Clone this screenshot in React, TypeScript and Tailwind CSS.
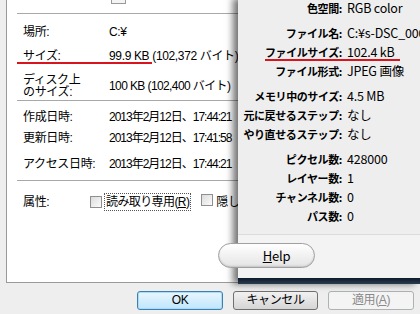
import { FC, ReactNode } from "react";

const jp = "font-['Liberation_Sans','Noto_Sans_CJK_JP',sans-serif]";

const Row: FC<{ label: ReactNode; value: ReactNode; h: string }> = ({ label, value, h }) => (
  <div className={`flex items-center ${h}`}>
    <div className="w-[102px] shrink-0 pl-[16px] leading-[12px]">{label}</div>
    <div className="whitespace-nowrap">{value}</div>
  </div>
);

const InfoRow: FC<{ label: string; value: string }> = ({ label, value }) => (
  <div className="flex h-[19px] items-center">
    <div className="flex w-[104px] shrink-0 justify-end text-[11px] font-bold whitespace-nowrap tracking-[-0.4px]">
      {label}
    </div>
    <div className="pl-[5px] whitespace-nowrap">{value}</div>
  </div>
);

const Checkbox: FC = () => (
  <span className="inline-block h-[12px] w-[12px] shrink-0 border border-[#8f8f8f] bg-gradient-to-br from-[#dcdcdc] to-[#fbfbfb]" />
);

const Date: FC<{ t: string }> = ({ t }) => <span className="tracking-[-1px]">{t}</span>;

const App: FC = () => {
  return (
    <div className={`relative h-[314px] w-[420px] overflow-hidden bg-[#eeeeee] text-[12px] text-black ${jp}`}>
      {/* left properties dialog */}
      <div className="ml-[6px] h-[283px] overflow-hidden border-b border-l border-[#9a9a9a] bg-white tracking-[-0.35px]">
        <div className="relative h-[13px]">
          <span className="absolute left-[104px] -top-[6px] h-[10px] w-[15px] border border-[#9a9a9a] bg-[#f4f4f4]" />
        </div>
        <div className="ml-[10px] border-t border-[#a8a8a8]" />
        <div className="mt-[9px]">
          <Row h="h-[18px]" label="場所:" value="C:¥" />
          <div className="h-[6px]" />
          <div className="relative">
            <Row h="h-[18px]" label="サイズ:" value="99.9 KB (102,372 バイト)" />
            <span className="absolute left-[10px] top-[15px] h-[2px] w-[135px] bg-[#d8141c]" />
          </div>
          <div className="h-[8px]" />
          <Row
            h="h-[26px]"
            label={
              <>
                ディスク上
                <br />
                のサイズ:
              </>
            }
            value={<span className="tracking-[-0.6px]">100 KB (102,400 バイト)</span>}
          />
        </div>
        <div className="ml-[10px] mt-[1px] border-t border-[#a8a8a8]" />
        <div className="mt-[7px]">
          <Row h="h-[18px]" label="作成日時:" value={<Date t="2013年2月12日、17:44:21" />} />
          <div className="h-[3px]" />
          <Row h="h-[18px]" label="更新日時:" value={<Date t="2013年2月12日、17:41:58" />} />
          <div className="h-[8px]" />
          <Row h="h-[18px]" label="アクセス日時:" value={<Date t="2013年2月12日、17:44:21" />} />
        </div>
        <div className="ml-[10px] mt-[7px] border-t border-[#a8a8a8]" />
        <div className="mt-[11px] flex h-[20px] items-center">
          <div className="w-[83px] shrink-0 pl-[16px]">属性:</div>
          <Checkbox />
          <span className="ml-[2px] border border-dotted border-[#555] px-[1px] leading-[16px] whitespace-nowrap tracking-[-0.6px]">
            読み取り専用(<span className="underline">R</span>)
          </span>
          <span className="ml-[10px]">
            <Checkbox />
          </span>
          <span className="ml-[3px] whitespace-nowrap">隠しファイル(H)</span>
        </div>
      </div>

      {/* dialog buttons */}
      <div className="flex gap-[10px] pl-[137px] pt-[8px] tracking-[-0.4px]">
        <button className="h-[19px] w-[86px] rounded-[3px] border border-[#3c7fb1] bg-gradient-to-b from-[#eaf6fd] to-[#bee6fd] text-[12px] leading-[17px] shadow-[inset_0_0_0_1px_#a9dcf7]">
          OK
        </button>
        <button className="h-[19px] w-[85px] rounded-[3px] border border-[#707070] bg-gradient-to-b from-[#f2f2f2] to-[#d5d5d5] text-[12px] leading-[17px]">
          キャンセル
        </button>
        <button className="h-[19px] w-[86px] rounded-[3px] border border-[#adb2b5] bg-[#f4f4f4] text-[12px] leading-[17px] text-[#8a8a8a]">
          適用(<span className="underline">A</span>)
        </button>
      </div>

      {/* image info window lying over the dialog */}
      <div className="absolute left-[238px] right-0 -top-[2px] h-[286px] bg-[#eeeeee] shadow-[-5px_0_7px_rgba(0,0,0,0.55)] font-['Noto_Sans_CJK_JP',sans-serif] text-[12.5px] tracking-[-0.2px]">
        <div className="flex h-[236px] flex-col gap-[6px] pt-[1px]">
          <div>
            <InfoRow label="色空間:" value="RGB color" />
          </div>
          <div className="relative">
            <InfoRow label="ファイル名:" value="C:¥s-DSC_0001.jpg" />
            <InfoRow label="ファイルサイズ:" value="102.4 kB" />
            <InfoRow label="ファイル形式:" value="JPEG 画像" />
            <span className="absolute left-[27px] top-[35px] h-[2px] w-[135px] bg-[#d8141c]" />
          </div>
          <div>
            <InfoRow label="メモリ中のサイズ:" value="4.5 MB" />
            <InfoRow label="元に戻せるステップ:" value="なし" />
            <InfoRow label="やり直せるステップ:" value="なし" />
          </div>
          <div>
            <InfoRow label="ピクセル数:" value="428000" />
            <InfoRow label="レイヤー数:" value="1" />
            <InfoRow label="チャンネル数:" value="0" />
            <InfoRow label="パス数:" value="0" />
          </div>
        </div>
        <div className="h-[44px] border-t border-[#dcdcdc] bg-[#f3f3f3] pt-[8px]">
          <button className="-ml-[20px] h-[25px] w-[97px] rounded-full border border-[#a0a0a0] bg-gradient-to-b from-[#ffffff] to-[#e4e4e4] pl-[20px] text-[13px] leading-[23px] shadow-[inset_0_-1px_2px_rgba(0,0,0,0.15)]">
            <span className="underline">H</span>elp
          </button>
        </div>
        <div className="h-[6px] bg-gradient-to-b from-[#0e1a28] to-[#2a3d52]" />
      </div>
    </div>
  );
};

export default App;
